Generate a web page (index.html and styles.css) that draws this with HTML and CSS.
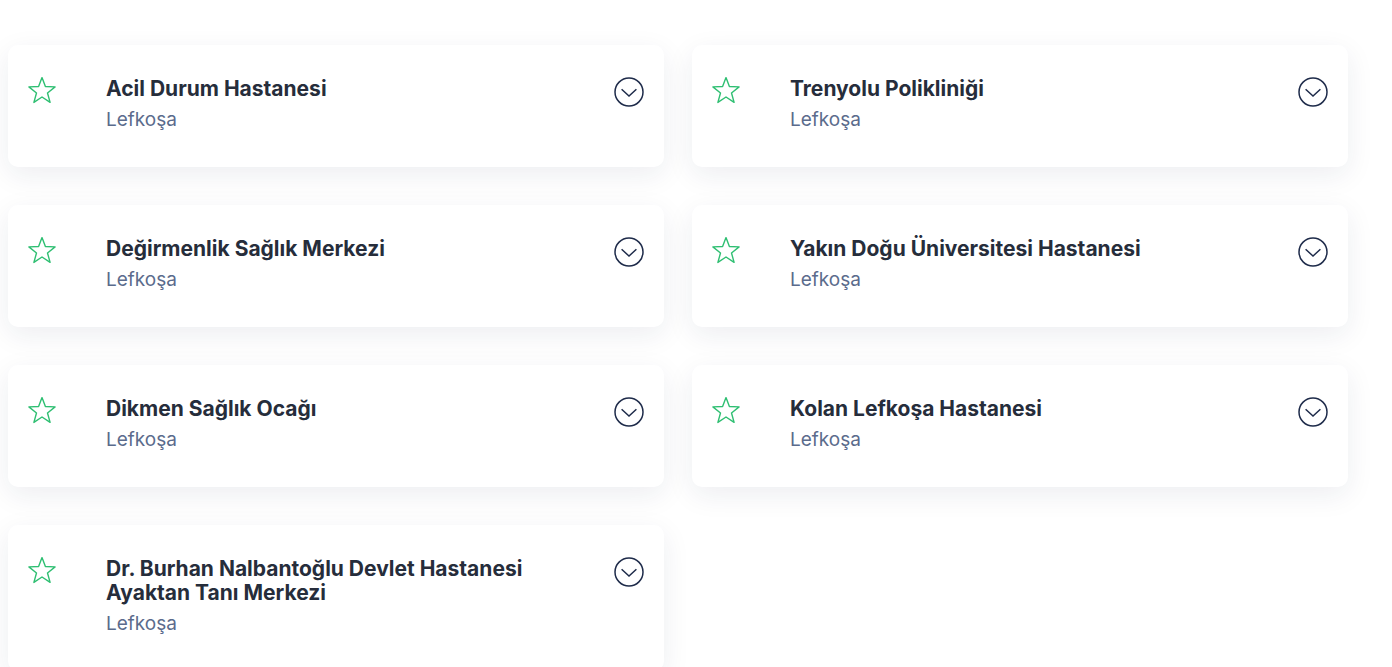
FILE: index.html
```html
<!DOCTYPE html>
<html>
<head>
  <title>Sağlık Kurumları</title>
  <link rel="stylesheet" href="styles.css">
</head>
<body>
  <div class="list">
    <div class="card">
      <svg class="star" viewBox="0 0 28 26"><path d="M14 .6l3.4 8.9 9.7.4-7.6 6.1 2.6 9.4L14 20l-8.1 5.4 2.6-9.4L.9 9.9l9.7-.4z"/></svg>
      <div class="info">
        <div class="name">Acil Durum Hastanesi</div>
        <div class="city">Lefkoşa</div>
      </div>
      <svg class="toggle" viewBox="0 0 30 30"><circle cx="15" cy="15" r="14"/><path d="M7.6 12.2l7.4 6.8 7.4-6.8"/></svg>
    </div>
    <div class="card">
      <svg class="star" viewBox="0 0 28 26"><path d="M14 .6l3.4 8.9 9.7.4-7.6 6.1 2.6 9.4L14 20l-8.1 5.4 2.6-9.4L.9 9.9l9.7-.4z"/></svg>
      <div class="info">
        <div class="name">Trenyolu Polikliniği</div>
        <div class="city">Lefkoşa</div>
      </div>
      <svg class="toggle" viewBox="0 0 30 30"><circle cx="15" cy="15" r="14"/><path d="M7.6 12.2l7.4 6.8 7.4-6.8"/></svg>
    </div>
    <div class="card">
      <svg class="star" viewBox="0 0 28 26"><path d="M14 .6l3.4 8.9 9.7.4-7.6 6.1 2.6 9.4L14 20l-8.1 5.4 2.6-9.4L.9 9.9l9.7-.4z"/></svg>
      <div class="info">
        <div class="name">Değirmenlik Sağlık Merkezi</div>
        <div class="city">Lefkoşa</div>
      </div>
      <svg class="toggle" viewBox="0 0 30 30"><circle cx="15" cy="15" r="14"/><path d="M7.6 12.2l7.4 6.8 7.4-6.8"/></svg>
    </div>
    <div class="card">
      <svg class="star" viewBox="0 0 28 26"><path d="M14 .6l3.4 8.9 9.7.4-7.6 6.1 2.6 9.4L14 20l-8.1 5.4 2.6-9.4L.9 9.9l9.7-.4z"/></svg>
      <div class="info">
        <div class="name">Yakın Doğu Üniversitesi Hastanesi</div>
        <div class="city">Lefkoşa</div>
      </div>
      <svg class="toggle" viewBox="0 0 30 30"><circle cx="15" cy="15" r="14"/><path d="M7.6 12.2l7.4 6.8 7.4-6.8"/></svg>
    </div>
    <div class="card">
      <svg class="star" viewBox="0 0 28 26"><path d="M14 .6l3.4 8.9 9.7.4-7.6 6.1 2.6 9.4L14 20l-8.1 5.4 2.6-9.4L.9 9.9l9.7-.4z"/></svg>
      <div class="info">
        <div class="name">Dikmen Sağlık Ocağı</div>
        <div class="city">Lefkoşa</div>
      </div>
      <svg class="toggle" viewBox="0 0 30 30"><circle cx="15" cy="15" r="14"/><path d="M7.6 12.2l7.4 6.8 7.4-6.8"/></svg>
    </div>
    <div class="card">
      <svg class="star" viewBox="0 0 28 26"><path d="M14 .6l3.4 8.9 9.7.4-7.6 6.1 2.6 9.4L14 20l-8.1 5.4 2.6-9.4L.9 9.9l9.7-.4z"/></svg>
      <div class="info">
        <div class="name">Kolan Lefkoşa Hastanesi</div>
        <div class="city">Lefkoşa</div>
      </div>
      <svg class="toggle" viewBox="0 0 30 30"><circle cx="15" cy="15" r="14"/><path d="M7.6 12.2l7.4 6.8 7.4-6.8"/></svg>
    </div>
    <div class="card">
      <svg class="star" viewBox="0 0 28 26"><path d="M14 .6l3.4 8.9 9.7.4-7.6 6.1 2.6 9.4L14 20l-8.1 5.4 2.6-9.4L.9 9.9l9.7-.4z"/></svg>
      <div class="info">
        <div class="name">Dr. Burhan Nalbantoğlu Devlet Hastanesi Ayaktan Tanı Merkezi</div>
        <div class="city">Lefkoşa</div>
      </div>
      <svg class="toggle" viewBox="0 0 30 30"><circle cx="15" cy="15" r="14"/><path d="M7.6 12.2l7.4 6.8 7.4-6.8"/></svg>
    </div>
  </div>
</body>
</html>
```

FILE: styles.css
```css
body {
  margin: 0;
  background: #ffffff;
  font-family: Inter, "Noto Sans", sans-serif;
}

.list {
  display: grid;
  grid-template-columns: 656px 656px;
  column-gap: 28px;
  row-gap: 38px;
  align-items: start;
  padding: 45px 8px 40px;
}

.card {
  display: flex;
  align-items: flex-start;
  background: #fff;
  border-radius: 10px;
  box-shadow: 0 8px 28px rgba(30, 40, 80, 0.08);
  padding: 32px 20px 34px 20px;
}

.star {
  width: 28px;
  height: 26px;
  margin-top: 0;
  margin-right: 50px;
  flex-shrink: 0;
  overflow: visible;
  fill: none;
  stroke: #2fbf72;
  stroke-width: 1.4;
  stroke-linejoin: round;
}

.info {
  flex: 1;
  padding-right: 80px;
}

.name {
  font-size: 21px;
  line-height: 24px;
  font-weight: 700;
  color: #262d3b;
}

.city {
  margin-top: 6px;
  font-size: 19px;
  line-height: 26px;
  color: #5b6b8c;
}

.toggle {
  width: 30px;
  height: 30px;
  margin-top: 0;
  flex-shrink: 0;
  overflow: visible;
  fill: none;
  stroke: #1e2b4a;
  stroke-width: 1.5;
}
```
